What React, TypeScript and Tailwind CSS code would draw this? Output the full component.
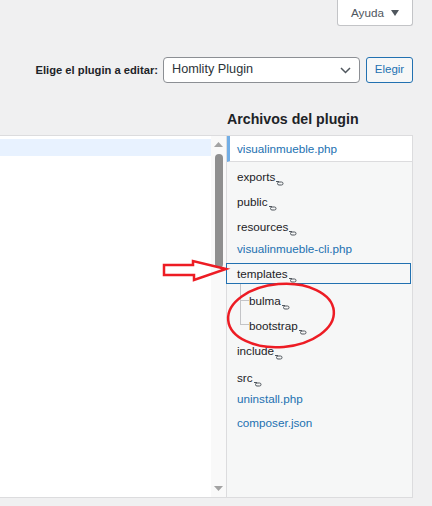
import React from "react";

const FolderGlyph = () => (
  <svg width="8" height="5" viewBox="0 0 8 5" className="inline-block align-[-5px] ml-[1px]">
    <line x1="0" y1="0.5" x2="3" y2="0.5" stroke="#50575e" strokeWidth="1" />
    <rect x="1.5" y="1" width="5.5" height="3" rx="1.5" fill="none" stroke="#50575e" strokeWidth="1" />
  </svg>
);

const Folder = ({ name, className = "" }: { name: string; className?: string }) => (
  <div className={`h-[20px] leading-[20px] text-[#1d2327] ${className}`}>
    {name}
    <FolderGlyph />
  </div>
);

const FileItem = ({ name, className = "" }: { name: string; className?: string }) => (
  <div className={`h-[20px] leading-[20px] text-[#2271b1] ${className}`}>{name}</div>
);

const Connector = ({ top, last }: { top: string; last?: boolean }) => (
  <div className="w-[9px] self-stretch flex flex-col shrink-0">
    <div className={`${top} border-l border-b border-[#c3c4c7]`} />
    <div className={last ? "flex-1" : "flex-1 border-l border-[#c3c4c7]"} />
  </div>
);

export default function App() {
  return (
    <div
      className="relative w-[432px] h-[506px] overflow-hidden bg-[#f0f0f1] text-[11.7px]"
      style={{ fontFamily: '"Liberation Sans", Arial, sans-serif' }}
    >
      {/* Help tab */}
      <div className="flex justify-end pr-[19px]">
        <button className="h-[26px] w-[76px] bg-white border border-t-0 border-[#c3c4c7] rounded-b-[3px] flex items-center justify-center gap-[7px] text-[#50575e] text-[11.7px]">
          <span>Ayuda</span>
          <svg width="8" height="6" viewBox="0 0 8 6">
            <path d="M0 0 L8 0 L4 6 Z" fill="#50575e" />
          </svg>
        </button>
      </div>

      {/* Plugin selector */}
      <div className="mt-[31px] flex justify-end items-center pr-[19px]">
        <label className="text-[11.2px] font-bold text-[#1d2327] mr-[5px]">Elige el plugin a editar:</label>
        <div className="w-[197px] h-[26px] bg-white border border-[#8c8f94] rounded-[4px] flex items-center justify-between pl-[8px] pr-[8px] text-[12.7px] text-[#2c3338]">
          <span>Homlity Plugin</span>
          <svg width="11" height="7" viewBox="0 0 11 7">
            <path d="M1 1 L5.5 5.5 L10 1" fill="none" stroke="#50575e" strokeWidth="1.5" />
          </svg>
        </div>
        <button className="ml-[6px] w-[47px] h-[26px] bg-[#f6f7f7] border border-[#2271b1] rounded-[3px] text-[#2271b1] text-[11.5px] flex items-center justify-center">
          Elegir
        </button>
      </div>

      {/* Main grid */}
      <div className="mt-[27px] grid grid-cols-[226px_187px]">
        <div />
        <h2 className="pl-[1px] h-[25px] text-[14.2px] font-bold text-[#1d2327] leading-[18px]">Archivos del plugin</h2>

        {/* Editor */}
        <div className="h-[363px] bg-white border-t border-b border-[#dcdcde] flex">
          <div className="w-[211px] pt-[3px]">
            <div className="h-[17px] bg-[#e8f2ff]" />
          </div>
          <div className="w-[15px] bg-[#f9f9f9] flex flex-col items-center pt-[6px] pb-[6px]">
            <svg width="9" height="5" viewBox="0 0 9 5">
              <path d="M0 5 L4.5 0 L9 5 Z" fill="#a3a3a3" />
            </svg>
            <div className="mt-[7px] w-[8px] h-[114px] rounded-full bg-[#8f8f8f]" />
            <div className="flex-1" />
            <svg width="9" height="5" viewBox="0 0 9 5">
              <path d="M0 0 L9 0 L4.5 5 Z" fill="#a3a3a3" />
            </svg>
          </div>
        </div>

        {/* File list */}
        <div className="h-[363px] bg-[#f6f7f7] border border-[#dcdcde]">
          <div className="h-[26px] bg-white border-l-[3px] border-l-[#72aee6] border-b border-[#dcdcde] pl-[7px] flex items-center text-[#2271b1]">
            visualinmueble.php
          </div>
          <div className="pl-[10px] pr-[1px]">
            <Folder name="exports" className="mt-[5px]" />
            <Folder name="public" className="mt-[5px]" />
            <Folder name="resources" className="mt-[5px]" />
            <FileItem name="visualinmueble-cli.php" className="mt-[2px]" />
            <div className="mt-[4px] -ml-[11px] h-[21px] border border-[#2271b1] pl-[10px] flex items-center text-[#1d2327]">
              <span>
                templates
                <FolderGlyph />
              </span>
            </div>
            <div className="ml-[3px]">
              <div className="flex h-[28px]">
                <Connector top="h-[17px]" />
                <div className="pt-[7px]">
                  <Folder name="bulma" />
                </div>
              </div>
              <div className="flex h-[26px]">
                <Connector top="h-[13px]" last />
                <div className="pt-[4px]">
                  <Folder name="bootstrap" />
                </div>
              </div>
            </div>
            <Folder name="include" className="mt-[3px]" />
            <Folder name="src" className="mt-[7px]" />
            <FileItem name="uninstall.php" className="mt-[1px]" />
            <FileItem name="composer.json" className="mt-[4px]" />
          </div>
        </div>
      </div>

      {/* Annotations */}
      <svg
        className="absolute left-0 top-0 pointer-events-none"
        width="432"
        height="506"
        viewBox="0 0 432 506"
      >
        <path
          d="M164 265 L193 265 L193 261 L226 269 L194 280 L194 275 L164 275 Z"
          fill="none"
          stroke="#ed1c24"
          strokeWidth="2.5"
          strokeLinejoin="miter"
        />
        <ellipse
          cx="281"
          cy="315.5"
          rx="53"
          ry="31.5"
          transform="rotate(-5 281 315.5)"
          fill="none"
          stroke="#ed1c24"
          strokeWidth="2.5"
        />
      </svg>
    </div>
  );
}
